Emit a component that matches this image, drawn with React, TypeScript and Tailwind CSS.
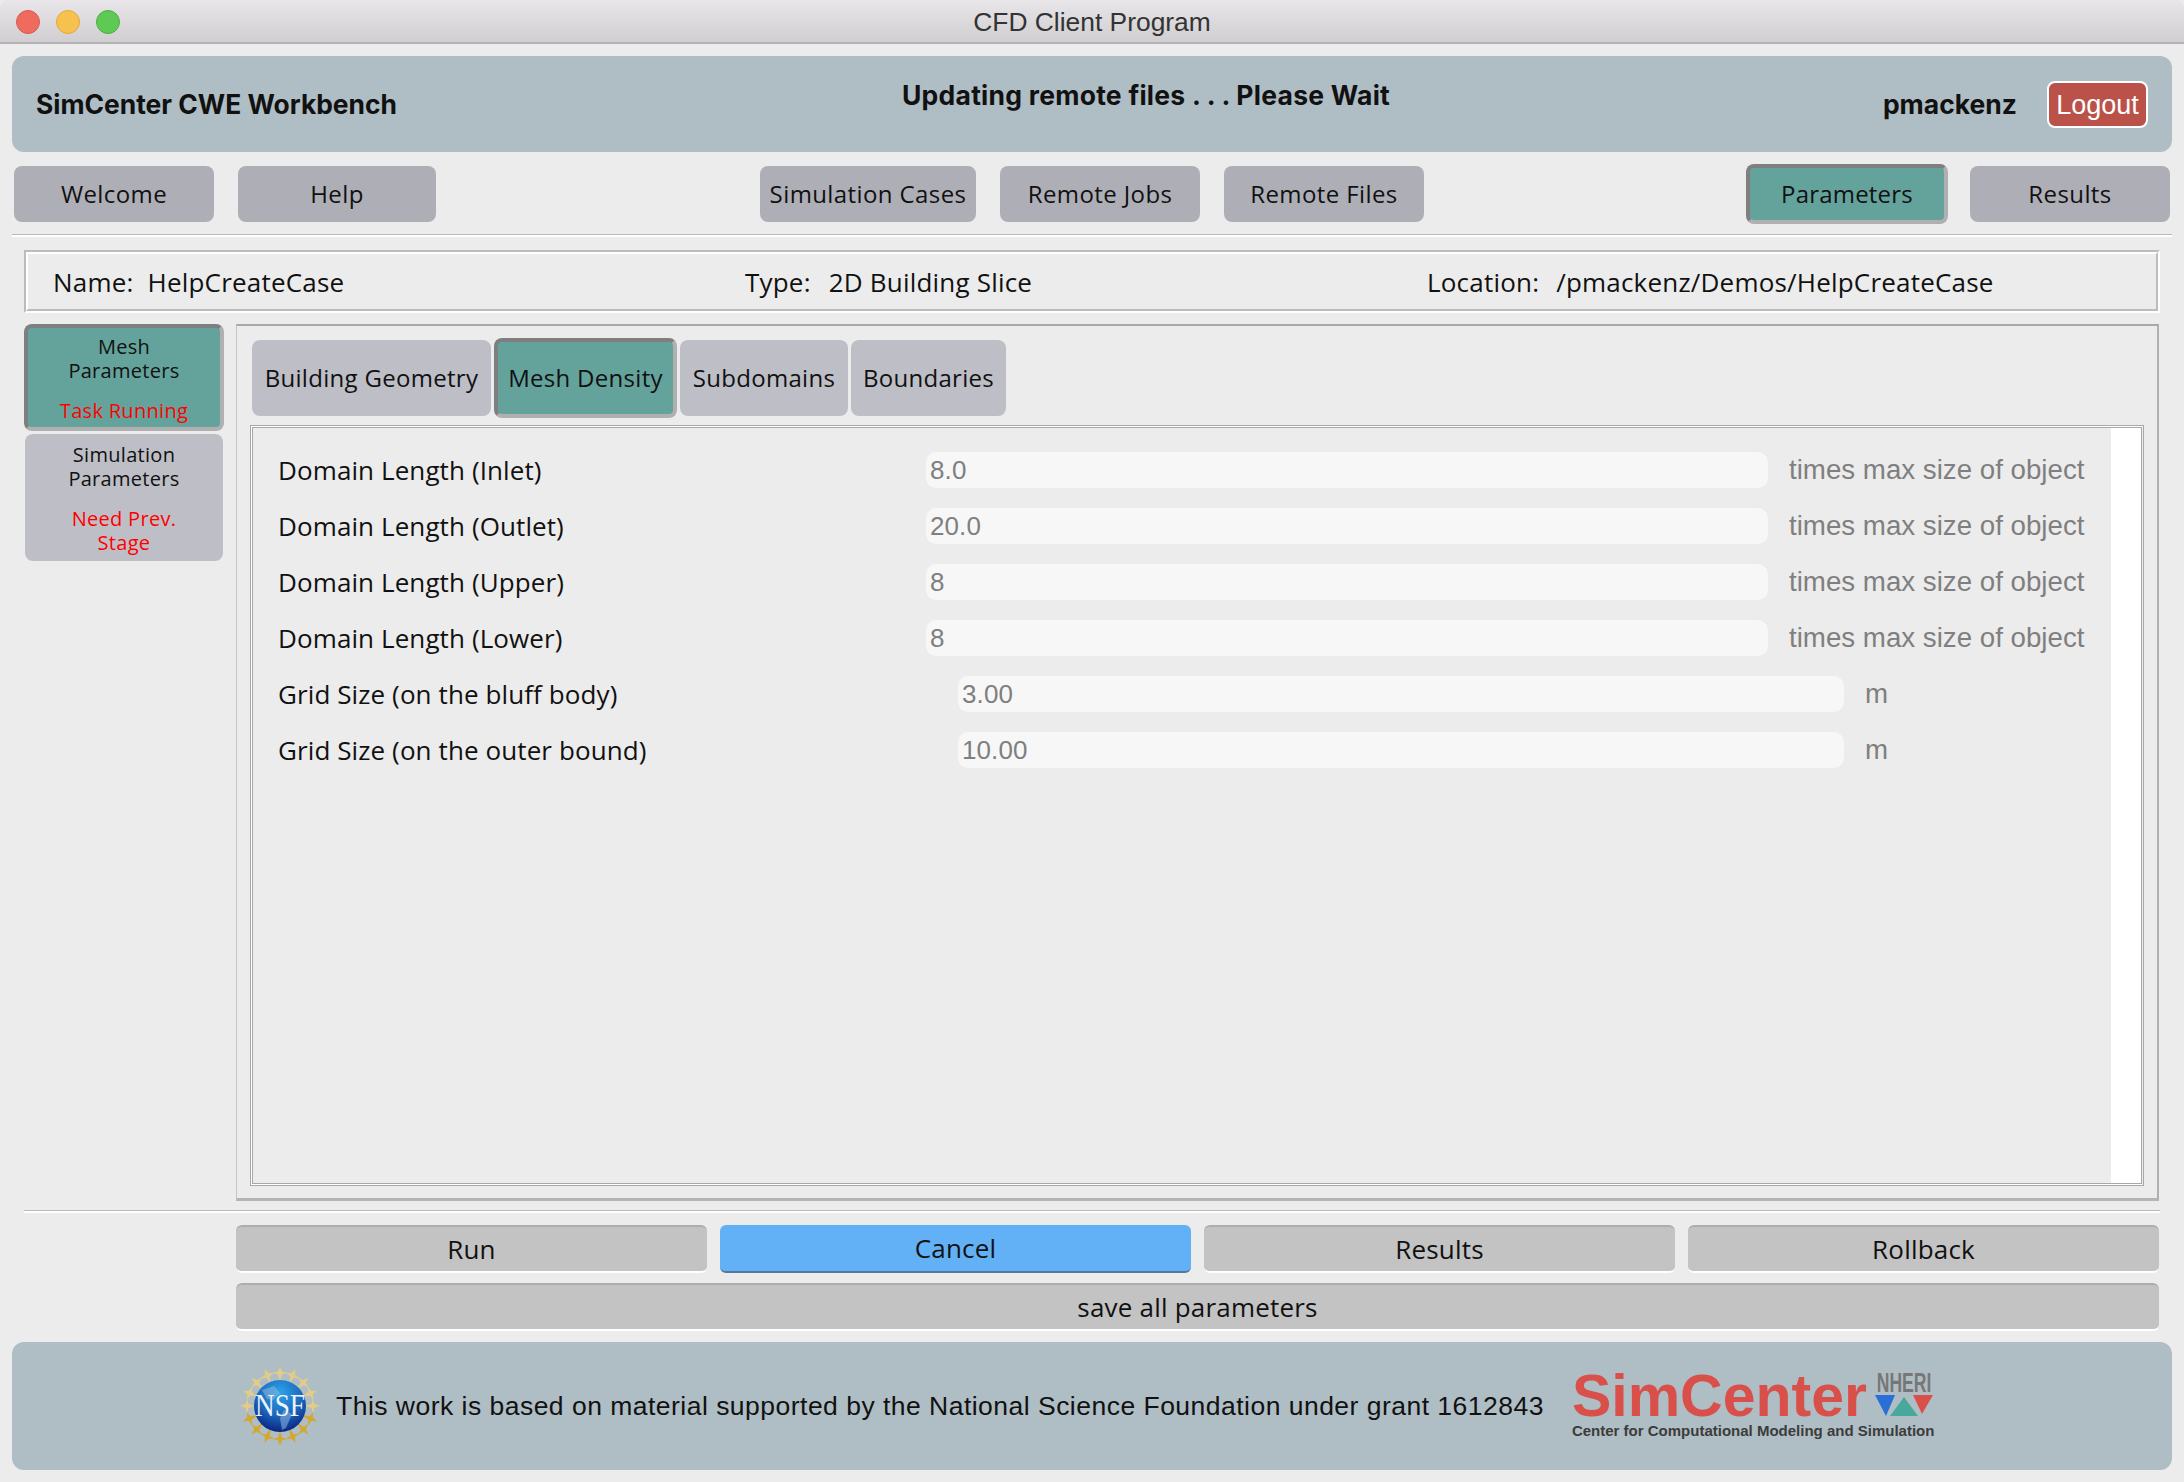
const UI_FONT = 'font-["Open_Sans","Noto_Sans",sans-serif]'

const ROWS = [
  { label: 'Domain Length (Inlet)', value: '8.0', unit: 'times max size of object', wide: false },
  { label: 'Domain Length (Outlet)', value: '20.0', unit: 'times max size of object', wide: false },
  { label: 'Domain Length (Upper)', value: '8', unit: 'times max size of object', wide: false },
  { label: 'Domain Length (Lower)', value: '8', unit: 'times max size of object', wide: false },
  { label: 'Grid Size (on the bluff body)', value: '3.00', unit: 'm', wide: true },
  { label: 'Grid Size (on the outer bound)', value: '10.00', unit: 'm', wide: true },
]

function NavButton({ label, width, active }: { label: string; width: string; active?: boolean }) {
  return (
    <div
      className={`${width} h-[56px] rounded-[8px] flex items-center justify-center text-[24px] text-[#111] ${
        active
          ? 'bg-[#64a39c] border-[4px] border-[#7f7f7f] border-r-[#b0b0b0] border-b-[#b0b0b0] h-[60px] -mt-[2px] tracking-[0.2px]'
          : 'bg-[#aeaeb6] tracking-[0.4px]'
      }`}
    >
      {label}
    </div>
  )
}

function Tab({ label, width, active }: { label: string; width: string; active?: boolean }) {
  return (
    <div
      className={`${width} rounded-[8px] flex items-center justify-center text-[24px] text-[#111] tracking-[0.3px] ${
        active
          ? 'h-[80px] -mt-[2px] bg-[#64a39c] border-[4px] border-[#7f7f7f] border-r-[#b0b0b0] border-b-[#b0b0b0]'
          : 'h-[76px] bg-[#bebec6]'
      }`}
    >
      {label}
    </div>
  )
}

function BottomButton({ label, active, grow }: { label: string; active?: boolean; grow?: boolean }) {
  return (
    <div
      className={`${grow ? 'w-full' : 'flex-1'} h-[48px] rounded-[6px] flex items-center justify-center text-[26px] tracking-[0.2px] text-[#111] ${
        active
          ? 'bg-[#62b1f6] border-b-[2px] border-b-[#55789a]'
          : 'bg-[#c3c3c3] border-t-[2px] border-t-[#adadad] border-b-[2px] border-b-white'
      }`}
    >
      {label}
    </div>
  )
}

function NsfLogo() {
  const stars = Array.from({ length: 16 }, (_, i) => (i * 360) / 16)
  return (
    <svg width="80" height="80" viewBox="0 0 80 80" className="shrink-0">
      <defs>
        <radialGradient id="globe" cx="50%" cy="25%" r="80%">
          <stop offset="0%" stopColor="#2ba4e8" />
          <stop offset="55%" stopColor="#1b66bc" />
          <stop offset="100%" stopColor="#081a78" />
        </radialGradient>
      </defs>
      {stars.map((deg, i) => (
        <polygon
          key={deg}
          points="40,0 42,5.5 47.5,7 42,8.5 40,16 38,8.5 32.5,7 38,5.5"
          fill={i > 4 && i < 12 ? '#d3a832' : '#e2cc8a'}
          transform={`rotate(${deg} 40 40)`}
        />
      ))}
      <circle cx="40" cy="40" r="26" fill="url(#globe)" />
      <path d="M22 24 L34 20 L40 27 L33 34 L27 33 Z M44 44 L52 48 L46 62 L42 64 L40 52 Z" fill="#8fb6dc" opacity="0.55" />
      <text
        x="40"
        y="50"
        textAnchor="middle"
        fontFamily="Liberation Serif, serif"
        fontSize="31"
        fill="#eef2fa"
        textLength="50"
        lengthAdjust="spacingAndGlyphs"
      >
        NSF
      </text>
    </svg>
  )
}

function SimCenterLogo() {
  return (
    <div className="w-[366px] ml-[28px] shrink-0 flex flex-col font-['Liberation_Sans',sans-serif]">
      <div className="flex items-start h-[46px]">
        <span className="text-[59px] leading-[46px] font-bold text-[#d9504a] w-[302px] whitespace-nowrap">
          SimCenter
        </span>
        <div className="flex flex-col items-center w-[60px] -mt-[1px]">
          <span className="text-[27px] leading-[23px] font-bold text-[#777] scale-x-[0.65] whitespace-nowrap">NHERI</span>
          <svg width="58" height="22" viewBox="0 0 58 22">
            <polygon points="0,0 20,0 11,21" fill="#2a6fd6" />
            <polygon points="29,2 43,21 15,21" fill="#48a89c" />
            <polygon points="38,0 58,0 47,19" fill="#d9504a" />
          </svg>
        </div>
      </div>
      <div className="text-[15px] leading-[18px] mt-[3px] font-bold text-[#3c3c3c] whitespace-nowrap">
        Center for Computational Modeling and Simulation
      </div>
    </div>
  )
}

export default function App() {
  return (
    <div className={`w-[2184px] h-[1482px] bg-[#ececec] flex flex-col overflow-hidden text-[#111] ${UI_FONT}`}>
      {/* Title bar */}
      <div className="relative h-[44px] shrink-0 flex items-center justify-center rounded-t-[8px] bg-gradient-to-b from-[#e8e6e8] to-[#d0ced0] border-b-[2px] border-b-[#b4b2b4]">
        <div className="absolute left-[16px] top-[10px] flex gap-[16px]">
          <span className="w-[24px] h-[24px] rounded-full bg-[#ef6a5f] border border-[#dd5a50]" />
          <span className="w-[24px] h-[24px] rounded-full bg-[#f7c14f] border border-[#e0a93a]" />
          <span className="w-[24px] h-[24px] rounded-full bg-[#5fca53] border border-[#4dae43]" />
        </div>
        <span className="text-[26.4px] text-[#333] mt-[4px] font-['Liberation_Sans',sans-serif]">CFD Client Program</span>
      </div>

      {/* Header */}
      <div className="mx-[12px] mt-[12px] h-[96px] shrink-0 rounded-[12px] bg-[#afbdc4] flex items-center font-['Inter',sans-serif] font-bold pl-[24px] pr-[24px]">
        <div className="w-[560px] text-[26.4px] mt-[2px]">SimCenter CWE Workbench</div>
        <div className="w-[1100px] text-center text-[26.5px] tracking-[0.25px] -mt-[16px]">
          Updating remote files . . . Please Wait
        </div>
        <div className="ml-auto text-[26.5px] mr-[30px] mt-[2px]">pmackenz</div>
        <div className="w-[101px] h-[47px] pt-[2px] rounded-[8px] bg-[#bb524a] border-[2px] border-white flex items-center justify-center text-white text-[27px] font-normal font-['Liberation_Sans',sans-serif]">
          Logout
        </div>
      </div>

      {/* Nav */}
      <div className="mt-[14px] h-[56px] shrink-0 flex pl-[14px] pr-[14px]">
        <NavButton label="Welcome" width="w-[200px]" />
        <div className="w-[24px]" />
        <NavButton label="Help" width="w-[198px]" />
        <div className="w-[324px]" />
        <NavButton label="Simulation Cases" width="w-[216px]" />
        <div className="w-[24px]" />
        <NavButton label="Remote Jobs" width="w-[200px]" />
        <div className="w-[24px]" />
        <NavButton label="Remote Files" width="w-[200px]" />
        <div className="w-[322px]" />
        <NavButton label="Parameters" width="w-[202px]" active />
        <div className="w-[22px]" />
        <NavButton label="Results" width="w-[200px]" />
      </div>

      <div className="mx-[12px] mt-[12px] h-[3px] shrink-0 border-t border-t-[#bcbcbc] border-b-[2px] border-b-white" />

      {/* Case info */}
      <div className="ml-[24px] mr-[24px] mt-[13px] h-[63px] shrink-0 border-[2px] border-[#bcbcbc] border-r-white border-b-white flex">
        <div className="flex-1 pt-[2px] border-b-[2px] border-b-[#bcbcbc] border-r-[2px] border-r-[#bcbcbc] border-l-[2px] border-l-white border-t-[2px] border-t-white flex items-center text-[26px] tracking-[0.2px] pl-[25px]">
          <div className="w-[692px] whitespace-nowrap">
            <span>Name:</span>
            <span className="ml-[14px]">HelpCreateCase</span>
          </div>
          <div className="w-[682px] whitespace-nowrap">
            <span>Type:</span>
            <span className="ml-[18px]">2D Building Slice</span>
          </div>
          <div className="whitespace-nowrap">
            <span>Location:</span>
            <span className="ml-[17px]">/pmackenz/Demos/HelpCreateCase</span>
          </div>
        </div>
      </div>

      {/* Main area */}
      <div className="mt-[11px] ml-[24px] mr-[25px] h-[877px] shrink-0 flex">
        <div className="w-[200px] shrink-0 flex flex-col gap-[3px] text-[20px] leading-[24px] text-center tracking-[0.3px]">
          <div className="h-[107px] rounded-[8px] bg-[#64a39c] border-[4px] border-[#7f7f7f] border-r-[#b0b0b0] border-b-[#b0b0b0] pt-[7px]">
            <div>Mesh</div>
            <div>Parameters</div>
            <div className="mt-[16px] text-[#ff0000]">Task Running</div>
          </div>
          <div className="mx-[1px] h-[127px] rounded-[8px] bg-[#bebec6] pt-[9px]">
            <div>Simulation</div>
            <div>Parameters</div>
            <div className="mt-[16px] text-[#ff0000]">Need Prev.</div>
            <div className="text-[#ff0000]">Stage</div>
          </div>
        </div>

        <div className="ml-[12px] flex-1 border-t-[2px] border-t-[#a8a8a8] border-r-[2px] border-r-[#b0b0b0] border-b-[3px] border-b-[#b4b4b4] border-l border-l-[#c4c4c4] pl-[13px] pr-[13px] pt-[14px]">
          <div className="flex gap-[3px] h-[76px] items-start pl-[2px]">
            <Tab label="Building Geometry" width="w-[239px]" />
            <Tab label="Mesh Density" width="w-[183px]" active />
            <Tab label="Subdomains" width="w-[168px]" />
            <Tab label="Boundaries" width="w-[155px]" />
          </div>

          <div className="mt-[9px] h-[761px] border border-[#a8a8a8] flex text-[26px] tracking-[0.1px]">
            <div className="flex-1 flex border border-white border-r-[#ececec]">
              <div className="flex-1 flex border border-[#a8a8a8]">
                <div className="flex-1 pt-[24px] pl-[25px] pr-[18px] flex flex-col gap-[20px]">
                  {ROWS.map((row) => (
                    <div key={row.label} className="flex items-center h-[36px]">
                      <div className={`${row.wide ? 'w-[680px]' : 'w-[648px]'} shrink-0 whitespace-nowrap`}>
                        {row.label}
                      </div>
                      <div
                        className={`${row.wide ? 'w-[886px]' : 'w-[842px]'} h-[36px] shrink-0 rounded-[10px] bg-[#f7f7f7] flex items-center pl-[4px] text-[#7f7f7f] font-['Liberation_Sans',sans-serif] text-[26px]`}
                      >
                        {row.value}
                      </div>
                      <div className="ml-[21px] whitespace-nowrap text-[#7f7f7f] font-['Liberation_Sans',sans-serif] text-[27.7px] tracking-normal">
                        {row.unit}
                      </div>
                    </div>
                  ))}
                </div>
                <div className="w-[30px] shrink-0 bg-white" />
              </div>
            </div>
          </div>
        </div>
      </div>

      <div className="mx-[24px] mt-[9px] h-[3px] shrink-0 border-t border-t-[#bcbcbc] border-b-[2px] border-b-white" />

      {/* Action buttons */}
      <div className="mt-[12px] ml-[236px] mr-[25px] shrink-0 flex gap-[13px]">
        <BottomButton label="Run" />
        <BottomButton label="Cancel" active />
        <BottomButton label="Results" />
        <BottomButton label="Rollback" />
      </div>
      <div className="mt-[10px] ml-[236px] mr-[25px] shrink-0">
        <BottomButton label="save all parameters" grow />
      </div>

      {/* Footer */}
      <div className="mx-[12px] mt-[11px] h-[128px] shrink-0 rounded-[12px] bg-[#afbdc4] flex items-center pl-[228px]">
        <NsfLogo />
        <div className="ml-[16px] pt-[2px] text-[26.5px] whitespace-nowrap font-['Liberation_Sans',sans-serif] tracking-[0.48px]">
          This work is based on material supported by the National Science Foundation under grant 1612843
        </div>
        <SimCenterLogo />
      </div>
    </div>
  )
}
